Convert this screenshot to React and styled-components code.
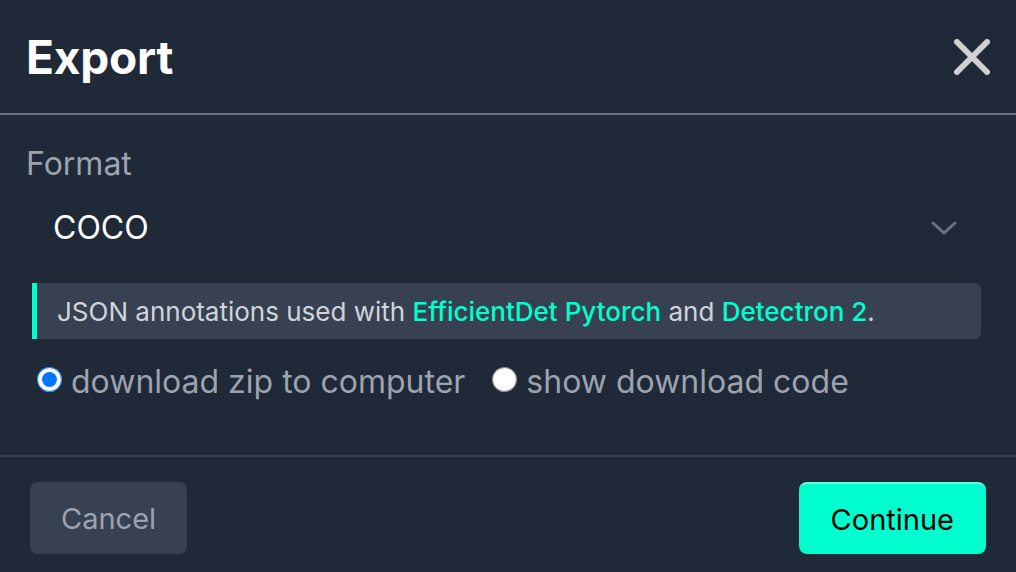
import React, { useState } from "react";
import styled, { createGlobalStyle } from "styled-components";

const GlobalStyle = createGlobalStyle`
  html, body {
    margin: 0;
    padding: 0;
    background: #1f2937;
  }
  body {
    font-family: Inter, "Noto Sans", "Liberation Sans", sans-serif;
  }
`;

const Modal = styled.div`
  width: 1016px;
  height: 572px;
  background: #1f2937;
  display: flex;
  flex-direction: column;
  overflow: hidden;
`;

const Header = styled.header`
  height: 115px;
  display: flex;
  align-items: center;
  justify-content: space-between;
  padding: 0 26px 0 26px;
  border-bottom: 2px solid #6b7280;
  box-sizing: border-box;
  flex-shrink: 0;
`;

const Title = styled.h1`
  margin: 0;
  font-size: 46px;
  font-weight: 700;
  color: #ffffff;
  letter-spacing: -0.2px;
`;

const CloseButton = styled.button`
  background: none;
  border: 0;
  padding: 0;
  width: 36px;
  height: 36px;
  display: flex;
  cursor: pointer;
`;

const Body = styled.section`
  flex: 1;
  padding: 25px 35px 0 26px;
  box-sizing: border-box;
  display: flex;
  flex-direction: column;
`;

const Label = styled.label`
  font-size: 32px;
  line-height: 48px;
  color: #9ca3af;
`;

const Select = styled.div`
  margin-top: 8px;
  height: 64px;
  display: flex;
  align-items: center;
  justify-content: space-between;
  padding: 0 24px 0 27px;
  font-size: 32px;
  line-height: 48px;
  color: #ffffff;
`;

const Info = styled.div`
  margin: 23px 0 0 6px;
  height: 56px;
  display: flex;
  align-items: center;
  padding-left: 20px;
  background: #374151;
  border-left: 5px solid #00ffce;
  border-radius: 0 6px 6px 0;
  font-size: 26px;
  color: #d1d5db;
`;

const Highlight = styled.span`
  color: #00ffce;
  font-weight: 500;
`;

const RadioRow = styled.div`
  margin: 19px 0 0 6px;
  display: flex;
  align-items: center;
  font-size: 32px;
  line-height: 48px;
  color: #9ca3af;
`;

const Option = styled.label`
  display: flex;
  align-items: center;
  margin-right: ${p => p.gap || 0}px;
  cursor: pointer;
`;

const Radio = styled.input.attrs({ type: "radio" })`
  width: 25px;
  height: 25px;
  margin: 0 9px 6px 5px;
  accent-color: #0075ff;
`;

const Footer = styled.footer`
  height: 117px;
  flex-shrink: 0;
  border-top: 2px solid #374151;
  box-sizing: border-box;
  display: flex;
  justify-content: space-between;
  align-items: flex-start;
  padding: 25px 30px 0;
`;

const Button = styled.button`
  height: 72px;
  padding: 0 ${p => (p.primary ? 32 : 31)}px;
  border-radius: 8px;
  border: 0;
  font-family: inherit;
  font-size: 29px;
  cursor: pointer;
  background: ${p => (p.primary ? "#00ffce" : "#374151")};
  color: ${p => (p.primary ? "#000000" : "#9ca3af")};
  border-top: ${p => (p.primary ? "2px solid #5fffe2" : "0")};
`;

const Chevron = () => (
  <svg width="26" height="16" viewBox="0 0 26 16" fill="none">
    <path d="M2 3 L13 13 L24 3" stroke="#6b7280" strokeWidth="3" strokeLinecap="round" strokeLinejoin="round" />
  </svg>
);

const CloseIcon = () => (
  <svg width="36" height="36" viewBox="0 0 36 36">
    <path d="M3 3 L33 33 M33 3 L3 33" stroke="#d1d1d1" strokeWidth="6" strokeLinecap="round" />
  </svg>
);

export default function App() {
  const [mode, setMode] = useState("zip");
  return (
    <Modal>
      <GlobalStyle />
      <Header>
        <Title>Export</Title>
        <CloseButton aria-label="Close">
          <CloseIcon />
        </CloseButton>
      </Header>
      <Body>
        <Label>Format</Label>
        <Select>
          <span>COCO</span>
          <Chevron />
        </Select>
        <Info>
          <span>
            JSON annotations used with <Highlight>EfficientDet Pytorch</Highlight> and{" "}
            <Highlight>Detectron 2</Highlight>.
          </span>
        </Info>
        <RadioRow>
          <Option gap={22}>
            <Radio name="mode" checked={mode === "zip"} onChange={() => setMode("zip")} />
            download zip to computer
          </Option>
          <Option>
            <Radio name="mode" checked={mode === "code"} onChange={() => setMode("code")} />
            show download code
          </Option>
        </RadioRow>
      </Body>
      <Footer>
        <Button>Cancel</Button>
        <Button primary>Continue</Button>
      </Footer>
    </Modal>
  );
}
